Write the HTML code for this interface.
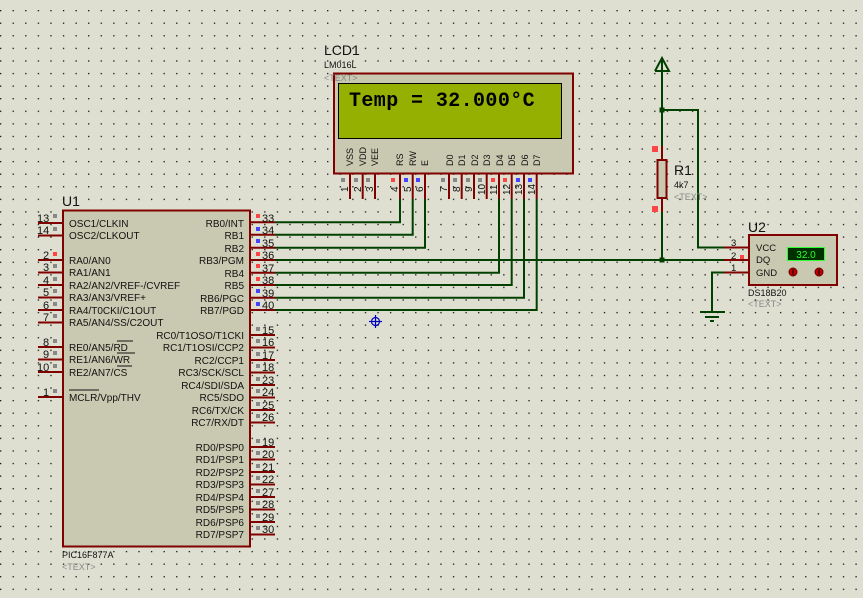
<!DOCTYPE html>
<html><head><meta charset="utf-8"><style>
html,body{margin:0;padding:0;background:#dedece;}
svg{display:block}
text{font-family:"Liberation Sans",sans-serif;}
</style></head><body>
<svg width="863" height="598" xmlns="http://www.w3.org/2000/svg">
<defs>
<pattern id="g" x="0" y="10" width="12.58" height="12.58" patternUnits="userSpaceOnUse">
<rect x="0" y="0" width="1.3" height="1.3" fill="#111"/>
</pattern>
</defs>
<rect width="863" height="598" fill="#dfdfd1"/>
<rect width="863" height="598" fill="url(#g)"/>

<!-- LCD -->
<text x="324" y="55" font-size="14" fill="#111">LCD1</text>
<text x="324" y="68" font-size="9" fill="#111">LM016L</text>
<rect x="334" y="73.5" width="239" height="100" fill="#c9c9b1" stroke="#800000" stroke-width="2"/>
<text x="324" y="81" font-size="9" fill="#888">&lt;TEXT&gt;</text>
<rect x="338.5" y="83.5" width="223" height="55" fill="#95b000" stroke="#000" stroke-width="1"/>
<text x="349" y="106" font-size="20" font-weight="bold" letter-spacing="0.4" fill="#000" style="font-family:'Liberation Mono',monospace">Temp = 32.000°C</text>
<g font-size="9" fill="#111">
<text transform="translate(353,166) rotate(-90)">VSS</text>
<text transform="translate(366,166) rotate(-90)">VDD</text>
<text transform="translate(378,166) rotate(-90)">VEE</text>
<text transform="translate(403,166) rotate(-90)">RS</text>
<text transform="translate(416,166) rotate(-90)">RW</text>
<text transform="translate(428,166) rotate(-90)">E</text>
<text transform="translate(453,166) rotate(-90)">D0</text>
<text transform="translate(465,166) rotate(-90)">D1</text>
<text transform="translate(478,166) rotate(-90)">D2</text>
<text transform="translate(490,166) rotate(-90)">D3</text>
<text transform="translate(503,166) rotate(-90)">D4</text>
<text transform="translate(515,166) rotate(-90)">D5</text>
<text transform="translate(528,166) rotate(-90)">D6</text>
<text transform="translate(540,166) rotate(-90)">D7</text>
</g>
<g stroke="#800000" stroke-width="2">
<line x1="350" y1="174" x2="350" y2="199"/><line x1="362.7" y1="174" x2="362.7" y2="199"/><line x1="375" y1="174" x2="375" y2="199"/>
<line x1="400" y1="174" x2="400" y2="199"/><line x1="412.7" y1="174" x2="412.7" y2="199"/><line x1="425" y1="174" x2="425" y2="199"/>
<line x1="449" y1="174" x2="449" y2="199"/><line x1="461.7" y1="174" x2="461.7" y2="199"/><line x1="474" y1="174" x2="474" y2="199"/><line x1="486.7" y1="174" x2="486.7" y2="199"/>
<line x1="499" y1="174" x2="499" y2="199"/><line x1="511.7" y1="174" x2="511.7" y2="199"/><line x1="524" y1="174" x2="524" y2="199"/><line x1="536.7" y1="174" x2="536.7" y2="199"/>
</g>
<g font-size="10" fill="#111">
<text transform="translate(348,192) rotate(-90)">1</text>
<text transform="translate(361,192) rotate(-90)">2</text>
<text transform="translate(373,192) rotate(-90)">3</text>
<text transform="translate(398,192) rotate(-90)">4</text>
<text transform="translate(411,192) rotate(-90)">5</text>
<text transform="translate(423,192) rotate(-90)">6</text>
<text transform="translate(447,192) rotate(-90)">7</text>
<text transform="translate(460,192) rotate(-90)">8</text>
<text transform="translate(472,192) rotate(-90)">9</text>
<text transform="translate(485,195) rotate(-90)">10</text>
<text transform="translate(497,195) rotate(-90)">11</text>
<text transform="translate(510,195) rotate(-90)">12</text>
<text transform="translate(522,195) rotate(-90)">13</text>
<text transform="translate(535,195) rotate(-90)">14</text>
</g>
<g>
<rect x="341" y="178" width="4" height="4" fill="#888"/><rect x="354" y="178" width="4" height="4" fill="#888"/><rect x="366" y="178" width="4" height="4" fill="#888"/>
<rect x="391" y="178" width="4" height="4" fill="#f44"/><rect x="404" y="178" width="4" height="4" fill="#44f"/><rect x="416" y="178" width="4" height="4" fill="#44f"/>
<rect x="441" y="178" width="4" height="4" fill="#888"/><rect x="453" y="178" width="4" height="4" fill="#888"/><rect x="466" y="178" width="4" height="4" fill="#888"/><rect x="478" y="178" width="4" height="4" fill="#888"/>
<rect x="491" y="178" width="4" height="4" fill="#f44"/><rect x="503" y="178" width="4" height="4" fill="#f44"/><rect x="516" y="178" width="4" height="4" fill="#44f"/><rect x="528" y="178" width="4" height="4" fill="#44f"/>
</g>

<!-- wires -->
<g stroke="#004000" stroke-width="2" fill="none">
<polyline points="275,222.3 400,222.3 400,199"/>
<polyline points="275,234.7 412.7,234.7 412.7,199"/>
<polyline points="275,247.7 425,247.7 425,199"/>
<polyline points="275,260 724,260"/>
<polyline points="275,272.7 499,272.7 499,199"/>
<polyline points="275,285 511.7,285 511.7,199"/>
<polyline points="275,297.7 524,297.7 524,199"/>
<polyline points="275,310 536.7,310 536.7,199"/>
<polyline points="662,60 662,146"/>
<polyline points="662,212 662,260"/>
<polyline points="662,110 698,110 698,247.5 724,247.5"/>
<polyline points="724,272.5 712,272.5 712,312"/>
<line x1="700" y1="312" x2="725" y2="312"/>
<line x1="705" y1="317" x2="719" y2="317"/>
<line x1="710" y1="321" x2="714" y2="321"/>
<polyline points="655,71 662,58 669,71 655,71"/>
</g>
<rect x="659.5" y="107.5" width="5" height="5" fill="#004000"/>
<rect x="659.5" y="257.5" width="5" height="5" fill="#004000"/>

<!-- cross marker -->
<g stroke="#0000c0" stroke-width="1.2" fill="none">
<circle cx="375.5" cy="321.5" r="4"/>
<line x1="369" y1="321.5" x2="382" y2="321.5"/><line x1="375.5" y1="315" x2="375.5" y2="328"/>
</g>

<!-- Resistor -->
<g stroke="#800000" stroke-width="2"><line x1="662" y1="146" x2="662" y2="160"/><line x1="662" y1="198" x2="662" y2="212"/></g>
<rect x="657.5" y="160" width="9" height="38" fill="#c9c9b1" stroke="#800000" stroke-width="2"/>
<rect x="652" y="146" width="6" height="6" fill="#f44"/>
<rect x="652" y="206" width="6" height="6" fill="#f44"/>
<text x="674" y="175" font-size="14" fill="#111">R1</text>
<text x="674" y="188" font-size="9" fill="#111">4k7</text>
<text x="674" y="200" font-size="9" fill="#888">&lt;TEXT&gt;</text>

<!-- U2 -->
<text x="748" y="232" font-size="14" fill="#111">U2</text>
<g stroke="#800000" stroke-width="2"><line x1="724" y1="247.5" x2="749" y2="247.5"/><line x1="724" y1="260" x2="749" y2="260"/><line x1="724" y1="272.5" x2="749" y2="272.5"/></g>
<rect x="749" y="235" width="88" height="50" fill="#c9c9b1" stroke="#800000" stroke-width="2"/>
<g font-size="9.5" fill="#111"><text x="731" y="246">3</text><text x="731" y="259">2</text><text x="731" y="271">1</text>
<text x="756" y="251">VCC</text><text x="756" y="263">DQ</text><text x="756" y="276">GND</text></g>
<rect x="740" y="255" width="4" height="4" fill="#f44"/>
<rect x="787.5" y="247.5" width="37" height="13" fill="#003000" stroke="#30ff30" stroke-width="1"/>
<text x="806" y="258" font-size="10" fill="#30ff30" text-anchor="middle">32.0</text>
<circle cx="793" cy="272" r="4" fill="#c00000" stroke="#600" stroke-width="1"/>
<circle cx="819" cy="272" r="4" fill="#c00000" stroke="#600" stroke-width="1"/>
<line x1="793" y1="269" x2="793" y2="275" stroke="#000"/><line x1="819" y1="269" x2="819" y2="275" stroke="#000"/>
<text x="748" y="296" font-size="9" fill="#111">DS18B20</text>
<text x="748" y="307" font-size="9" fill="#888">&lt;TEXT&gt;</text>

<!-- PIC -->
<text x="62" y="206" font-size="14" fill="#111">U1</text>
<rect x="63" y="210.5" width="187" height="336" fill="#c9c9b1" stroke="#800000" stroke-width="2"/>
<g stroke="#800000" stroke-width="2">
<line x1="38" y1="223" x2="63" y2="223"/><line x1="38" y1="235.5" x2="63" y2="235.5"/>
<line x1="38" y1="260" x2="63" y2="260"/><line x1="38" y1="272.5" x2="63" y2="272.5"/><line x1="38" y1="285" x2="63" y2="285"/><line x1="38" y1="297.5" x2="63" y2="297.5"/><line x1="38" y1="310" x2="63" y2="310"/><line x1="38" y1="322.5" x2="63" y2="322.5"/>
<line x1="38" y1="347" x2="63" y2="347"/><line x1="38" y1="359.5" x2="63" y2="359.5"/><line x1="38" y1="372" x2="63" y2="372"/><line x1="38" y1="397" x2="63" y2="397"/>
<line x1="250" y1="222.3" x2="275" y2="222.3"/><line x1="250" y1="234.7" x2="275" y2="234.7"/><line x1="250" y1="247.7" x2="275" y2="247.7"/><line x1="250" y1="260" x2="275" y2="260"/><line x1="250" y1="272.7" x2="275" y2="272.7"/><line x1="250" y1="285" x2="275" y2="285"/><line x1="250" y1="297.7" x2="275" y2="297.7"/><line x1="250" y1="310" x2="275" y2="310"/>
<line x1="250" y1="335" x2="275" y2="335"/><line x1="250" y1="347.5" x2="275" y2="347.5"/><line x1="250" y1="360" x2="275" y2="360"/><line x1="250" y1="372.5" x2="275" y2="372.5"/><line x1="250" y1="385" x2="275" y2="385"/><line x1="250" y1="397.5" x2="275" y2="397.5"/><line x1="250" y1="410" x2="275" y2="410"/><line x1="250" y1="422.5" x2="275" y2="422.5"/>
<line x1="250" y1="447" x2="275" y2="447"/><line x1="250" y1="459.5" x2="275" y2="459.5"/><line x1="250" y1="472" x2="275" y2="472"/><line x1="250" y1="484.5" x2="275" y2="484.5"/><line x1="250" y1="497" x2="275" y2="497"/><line x1="250" y1="509.5" x2="275" y2="509.5"/><line x1="250" y1="522" x2="275" y2="522"/><line x1="250" y1="534.5" x2="275" y2="534.5"/>
</g>
<g font-size="11" fill="#111">
<text x="37" y="222">13</text><text x="37" y="234">14</text><text x="43" y="259">2</text><text x="43" y="271">3</text><text x="43" y="284">4</text><text x="43" y="296">5</text><text x="43" y="309">6</text><text x="43" y="321">7</text>
<text x="43" y="346">8</text><text x="43" y="358">9</text><text x="37" y="371">10</text><text x="43" y="396">1</text>
<text x="262" y="222">33</text><text x="262" y="234">34</text><text x="262" y="247">35</text><text x="262" y="259">36</text><text x="262" y="272">37</text><text x="262" y="284">38</text><text x="262" y="297">39</text><text x="262" y="309">40</text>
<text x="262" y="334">15</text><text x="262" y="346">16</text><text x="262" y="359">17</text><text x="262" y="371">18</text><text x="262" y="384">23</text><text x="262" y="396">24</text><text x="262" y="409">25</text><text x="262" y="421">26</text>
<text x="262" y="446">19</text><text x="262" y="458">20</text><text x="262" y="471">21</text><text x="262" y="483">22</text><text x="262" y="496">27</text><text x="262" y="508">28</text><text x="262" y="521">29</text><text x="262" y="533">30</text>
</g>
<g fill="#888">
<rect x="53" y="214" width="4" height="4"/><rect x="53" y="227" width="4" height="4"/><rect x="53" y="252" width="4" height="4" fill="#f44"/><rect x="53" y="264" width="4" height="4"/><rect x="53" y="277" width="4" height="4"/><rect x="53" y="289" width="4" height="4"/><rect x="53" y="302" width="4" height="4"/><rect x="53" y="314" width="4" height="4"/>
<rect x="53" y="339" width="4" height="4"/><rect x="53" y="351" width="4" height="4"/><rect x="53" y="364" width="4" height="4"/><rect x="53" y="389" width="4" height="4"/>
<rect x="256" y="214" width="4" height="4" fill="#f44"/><rect x="256" y="227" width="4" height="4" fill="#44f"/><rect x="256" y="239" width="4" height="4" fill="#44f"/><rect x="256" y="252" width="4" height="4" fill="#f44"/><rect x="256" y="264" width="4" height="4" fill="#f44"/><rect x="256" y="277" width="4" height="4" fill="#f44"/><rect x="256" y="289" width="4" height="4" fill="#44f"/><rect x="256" y="302" width="4" height="4" fill="#44f"/>
<rect x="256" y="327" width="4" height="4"/><rect x="256" y="339" width="4" height="4"/><rect x="256" y="352" width="4" height="4"/><rect x="256" y="364" width="4" height="4"/><rect x="256" y="377" width="4" height="4"/><rect x="256" y="389" width="4" height="4"/><rect x="256" y="402" width="4" height="4"/><rect x="256" y="414" width="4" height="4"/>
<rect x="256" y="439" width="4" height="4"/><rect x="256" y="451" width="4" height="4"/><rect x="256" y="464" width="4" height="4"/><rect x="256" y="476" width="4" height="4"/><rect x="256" y="489" width="4" height="4"/><rect x="256" y="501" width="4" height="4"/><rect x="256" y="514" width="4" height="4"/><rect x="256" y="526" width="4" height="4"/>
</g>
<g font-size="10" fill="#111">
<text x="69" y="227">OSC1/CLKIN</text><text x="69" y="239">OSC2/CLKOUT</text>
<text x="69" y="264">RA0/AN0</text><text x="69" y="276">RA1/AN1</text><text x="69" y="289">RA2/AN2/VREF-/CVREF</text><text x="69" y="301">RA3/AN3/VREF+</text><text x="69" y="314">RA4/T0CKI/C1OUT</text><text x="69" y="326">RA5/AN4/SS/C2OUT</text>
<text x="69" y="351">RE0/AN5/RD</text><text x="69" y="363">RE1/AN6/WR</text><text x="69" y="376">RE2/AN7/CS</text>
<text x="69" y="401">MCLR/Vpp/THV</text>
<g text-anchor="end">
<text x="244" y="227">RB0/INT</text><text x="244" y="239">RB1</text><text x="244" y="252">RB2</text><text x="244" y="264">RB3/PGM</text><text x="244" y="277">RB4</text><text x="244" y="289">RB5</text><text x="244" y="302">RB6/PGC</text><text x="244" y="314">RB7/PGD</text>
<text x="244" y="339">RC0/T1OSO/T1CKI</text><text x="244" y="351">RC1/T1OSI/CCP2</text><text x="244" y="364">RC2/CCP1</text><text x="244" y="376">RC3/SCK/SCL</text><text x="244" y="389">RC4/SDI/SDA</text><text x="244" y="401">RC5/SDO</text><text x="244" y="414">RC6/TX/CK</text><text x="244" y="426">RC7/RX/DT</text>
<text x="244" y="451">RD0/PSP0</text><text x="244" y="463">RD1/PSP1</text><text x="244" y="476">RD2/PSP2</text><text x="244" y="488">RD3/PSP3</text><text x="244" y="501">RD4/PSP4</text><text x="244" y="513">RD5/PSP5</text><text x="244" y="526">RD6/PSP6</text><text x="244" y="538">RD7/PSP7</text>
</g>
</g>
<g stroke="#111" stroke-width="1">
<line x1="117" y1="341" x2="133" y2="341"/><line x1="117" y1="353" x2="135" y2="353"/><line x1="117" y1="366" x2="132" y2="366"/><line x1="69" y1="390" x2="99" y2="390"/>
</g>
<text x="62" y="558" font-size="9" fill="#111">PIC16F877A</text>
<text x="62" y="570" font-size="9" fill="#888">&lt;TEXT&gt;</text>
</svg>
</body></html>
